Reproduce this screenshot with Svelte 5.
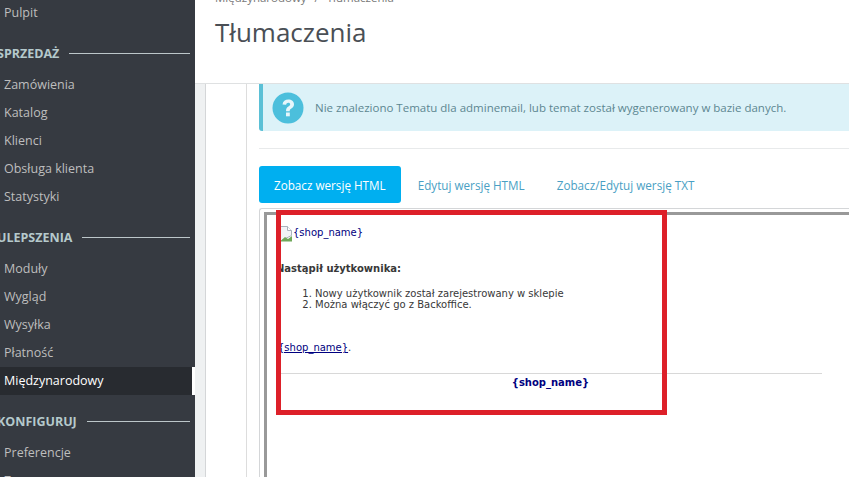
<script>
	const groups = [
		{ items: ['Pulpit'] },
		{ title: 'SPRZEDAŻ', items: ['Zamówienia', 'Katalog', 'Klienci', 'Obsługa klienta', 'Statystyki'] },
		{ title: 'ULEPSZENIA', items: ['Moduły', 'Wygląd', 'Wysyłka', 'Płatność', 'Międzynarodowy'] },
		{ title: 'KONFIGURUJ', items: ['Preferencje', 'Zaawansowane'] }
	];
	const active = 'Międzynarodowy';
</script>

<div class="page">
	<nav class="sidebar">
		{#each groups as group}
			{#if group.title}
				<div class="heading"><span>{group.title}</span><i></i></div>
			{/if}
			{#each group.items as item}
				<a class="link" class:active={item === active} href="#top">{item}</a>
			{/each}
		{/each}
	</nav>

	<main class="main">
		<header class="head">
			<div class="crumbs">Międzynarodowy <b>/</b> Tłumaczenia</div>
			<h1>Tłumaczenia</h1>
		</header>

		<div class="gutter">
			<div class="panel">
				<div class="alert">
					<svg class="qmark" width="32" height="32" viewBox="0 0 32 32">
						<circle cx="16" cy="16" r="15.5" fill="#4cbfdc" />
						<path d="M10.5 12.5c.4-3.2 2.7-5 5.8-5 3.3 0 5.7 1.9 5.7 4.8 0 2.100-1.100 3.300-2.600 4.300-1.200.8-1.700 1.300-1.700 2.600h-3.700c0-2.500.8-3.600 2.400-4.700 1.100-.8 1.800-1.300 1.800-2.200 0-1-.8-1.600-1.900-1.600-1.200 0-2 .8-2.200 2.100z" fill="#e6f6fb" />
						<rect x="14" y="20.500" width="3.800" height="3.800" fill="#e6f6fb" />
					</svg>
					<span>Nie znaleziono Tematu dla adminemail, lub temat został wygenerowany w bazie danych.</span>
				</div>
				<hr class="rule" />
				<div class="tabs">
					<a class="tab on" href="#top">Zobacz wersję HTML</a>
					<a class="tab" href="#top">Edytuj wersję HTML</a>
					<a class="tab" href="#top">Zobacz/Edytuj wersję TXT</a>
				</div>
				<div class="frame">
					<div class="mail">
						<p class="logo">
							<svg width="14" height="16" viewBox="0 0 14 16">
								<path d="M.5.5h8l4 4v5l-12 6z" fill="#f2f4f7" stroke="#a9b2bd" />
								<path d="M8.500.5v4h4" fill="#fff" stroke="#a9b2bd" />
								<path d="M1 15.500 6 11l3 2 4-3v5.500z" fill="#6fa85a" />
							</svg><span class="blue">{'{shop_name}'}</span>
						</p>
						<p class="lead">Nastąpił użytkownika:</p>
						<ol>
							<li>Nowy użytkownik został zarejestrowany w sklepie</li>
							<li>Można włączyć go z Backoffice.</li>
						</ol>
						<p class="sign"><u class="blue">{'{shop_name}'}</u>.</p>
						<hr />
						<p class="foot">{'{shop_name}'}</p>
					</div>
				</div>
				<div class="mark"></div>
			</div>
		</div>
	</main>
</div>

<style>
	:global(body) {
		margin: 0;
		background: #fff;
	}
	.page {
		display: flex;
		width: 849px;
		height: 477px;
		overflow: hidden;
		font-family: 'Open Sans', sans-serif;
	}
	.sidebar {
		flex: 0 0 195px;
		background: #363a41;
		overflow: hidden;
		height: 477px;
		margin: 0;
	}
	.link {
		display: block;
		height: 28px;
		line-height: 27px;
		padding-left: 4px;
		font-size: 12.5px;
		color: #bebebe;
		text-decoration: none;
		box-sizing: border-box;
	}
	.link:first-child {
		margin-top: -1px;
	}
	.link.active {
		background: #282b30;
		color: #fff;
		border-right: 3px solid #fff;
	}
	.heading {
		display: flex;
		align-items: center;
		gap: 10px;
		height: 28px;
		margin: 12px 5px 4px -3px;
		font-size: 12.5px;
		font-weight: 700;
		color: #b5c9cc;
	}
	.heading i {
		flex: 1;
		height: 1px;
		background: #bcc6c9;
	}
	.main {
		flex: 1;
		min-width: 0;
		display: flex;
		flex-direction: column;
	}
	.head {
		height: 83px;
		flex: none;
		padding-left: 20px;
		border-bottom: 1px solid #dfe1e2;
		box-sizing: content-box;
	}
	.crumbs {
		font-size: 11.5px;
		color: #777;
		height: 10px;
		line-height: 10px;
		margin-top: -7px;
		white-space: nowrap;
	}
	.crumbs b {
		font-weight: 400;
		margin: 0 5px;
	}
	h1 {
		margin: 11px 0 0;
		font-size: 26px;
		line-height: 36px;
		font-weight: 400;
		color: #4a4f55;
	}
	.gutter {
		flex: 1;
		min-height: 0;
		padding-left: 10px;
		background: #eff1f2;
	}
	.panel {
		position: relative;
		height: 100%;
		padding-left: 53px;
		background: linear-gradient(#ddd, #ddd) 40px 0 / 1px 100% no-repeat #fff;
		border-left: 1px solid #d4d6d8;
		box-sizing: border-box;
	}
	.alert {
		display: flex;
		align-items: center;
		gap: 11px;
		height: 47px;
		padding-left: 9px;
		background: #dcf2f8;
		border-left: 4px solid #5bc0d6;
		border-radius: 0 0 0 3px;
		box-sizing: border-box;
		font-size: 11.5px;
		color: #5c8791;
		white-space: nowrap;
	}
	.qmark {
		flex: none;
	}
	.rule {
		margin: 17px 0;
		border: 0;
		border-top: 1px solid #e8eaeb;
	}
	.tabs {
		display: flex;
		height: 37px;
		align-items: center;
		font-size: 11.7px;
		white-space: nowrap;
	}
	.tab {
		color: #4a9fc4;
		text-decoration: none;
		margin-left: 32px;
	}
	.tab:nth-child(2) {
		margin-left: 17px;
	}
	.tab.on {
		margin-left: 0;
		display: flex;
		align-items: center;
		height: 37px;
		padding: 0 15px;
		background: #00aff0;
		border-radius: 3px;
		color: #fff;
	}
	.frame {
		margin-top: 5px;
		height: 300px;
		padding: 3px 0 0 4px;
		border: 1px solid #d4d6d8;
		border-right: 0;
		box-sizing: border-box;
		border-radius: 3px 0 0 0;
	}
	.mail {
		height: 100%;
		border: solid #999;
		border-width: 3px 0 0 3px;
		padding: 11px 27px 0 12px;
		font-family: 'DejaVu Sans', Verdana, sans-serif;
		font-size: 10px;
		line-height: 11px;
		color: #383838;
		box-sizing: border-box;
	}
	.mail p {
		margin: 0;
	}
	.blue {
		color: #000080;
	}
	.logo {
		display: flex;
		align-items: flex-start;
		height: 16px;
		line-height: 14px;
	}
	.logo span {
		font-size: 10px;
	}
	.mail .lead {
		margin: 20px 0 0 -3px;
		font-weight: 700;
		line-height: 14px;
	}
	ol {
		margin: 12px 0 0;
		padding-left: 36px;
	}
	.mail .sign {
		margin: 31px 0 0 -1px;
		line-height: 14px;
	}
	.mail hr {
		margin: 18px 0 0;
		border: 0;
		border-top: 1px solid #d8d8d8;
	}
	.mail .foot {
		margin-top: 2px;
		text-align: center;
		font-weight: 700;
		color: #000080;
		line-height: 14px;
	}
	.mark {
		position: absolute;
		left: 70px;
		top: 126px;
		width: 391px;
		height: 205px;
		border: 5px solid #dd2029;
		box-sizing: border-box;
	}
</style>
